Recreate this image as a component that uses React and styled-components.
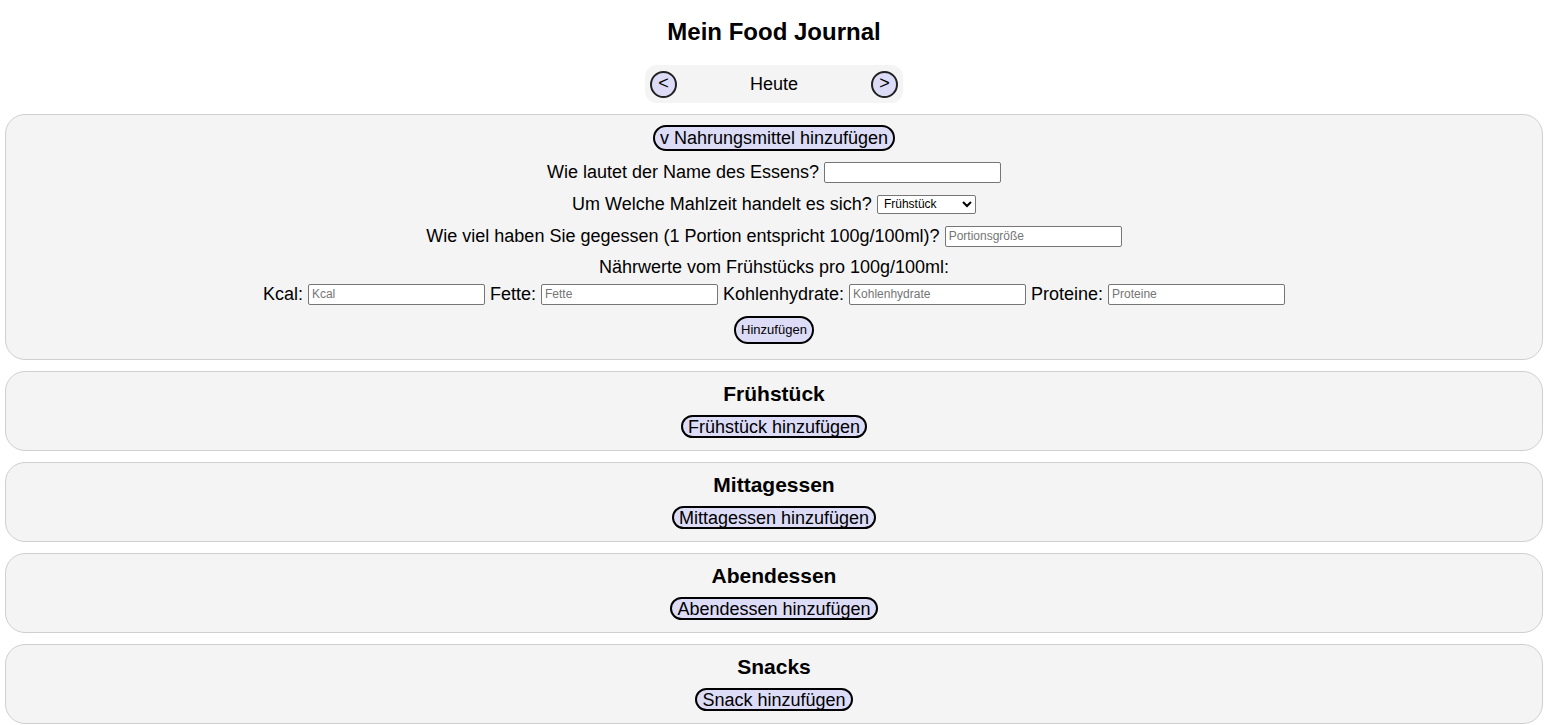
import styled, { createGlobalStyle } from "styled-components";

const GlobalStyle = createGlobalStyle`
    body {
        margin: 0;
        font-family: "Liberation Sans", Arial, sans-serif;
        color: #000;
        background: #fff;
    }
`;

const Page = styled.div`
    padding: 0 11px 0 5px;
    display: flex;
    flex-direction: column;
    gap: 11px;
`;

const Header = styled.div`
    display: flex;
    flex-direction: column;
    align-items: center;
    padding-top: 18px;
`;

const Title = styled.h1`
    margin: 0;
    font-size: 24px;
    line-height: 27px;
    font-weight: bold;
`;

const DateNav = styled.div`
    margin-top: 20px;
    width: 258px;
    height: 38px;
    box-sizing: border-box;
    padding: 0 5px;
    background: #f4f4f4;
    border-radius: 12px;
    display: flex;
    align-items: center;
    justify-content: space-between;
    font-size: 18px;
`;

const RoundButton = styled.button`
    width: 27px;
    height: 27px;
    padding: 0 0 2px;
    border-radius: 50%;
    border: 2px solid #222;
    background: #dcdcf6;
    font-family: "Liberation Sans", Arial, sans-serif;
    font-size: 18px;
    line-height: 20px;
    color: #000;
`;

const Section = styled.section`
    background: #f4f4f4;
    border: 1px solid #cfcfcf;
    border-radius: 20px;
    padding: ${p => (p.$form ? "10px 0 15px" : "10px 0 12px")};
    display: flex;
    flex-direction: column;
    align-items: center;
`;

const PillButton = styled.button`
    height: ${p => (p.$small ? "28px" : "23px")};
    padding: 0 5px;
    border: 2px solid #000;
    border-radius: 14px;
    background: #dcdcf6;
    color: #000;
    font-family: "Liberation Sans", Arial, sans-serif;
    font-size: ${p => (p.$small ? "13px" : "18px")};
    line-height: 18px;
`;

const ToggleButton = styled(PillButton)`
    height: 26px;
`;

const Form = styled.div`
    display: flex;
    flex-direction: column;
    align-items: center;
    gap: 8px;
    margin-top: 9px;
`;

const Row = styled.div`
    height: 24px;
    display: flex;
    align-items: center;
    justify-content: center;
    font-size: 18px;
    gap: 5px;
`;

const NutritionBlock = styled.div`
    display: flex;
    flex-direction: column;
    align-items: center;
    gap: 3px;
    margin-top: -1px;
    margin-bottom: 2px;
`;

const TextInput = styled.input`
    width: 177px;
    height: 21px;
    box-sizing: border-box;
    border: 1px solid #767676;
    border-radius: 2px;
    padding: 1px 3px;
    background: #fff;
    font-family: "Liberation Sans", Arial, sans-serif;
    font-size: 12px;
    &::placeholder {
        color: #757575;
    }
`;

const Select = styled.select`
    width: 99px;
    height: 19px;
    font-family: "Liberation Sans", Arial, sans-serif;
    font-size: 12px;
    border: 1px solid #767676;
    border-radius: 2px;
    background: #fff;
    padding: 0 2px;
`;

const Label = styled.span`
    font-size: 18px;
`;

const MealTitle = styled.h2`
    margin: 0;
    font-size: 21px;
    line-height: 23px;
    font-weight: bold;
`;

const MealBody = styled.div`
    margin-top: 10px;
`;

const meals = [
    { title: "Frühstück", button: "Frühstück hinzufügen" },
    { title: "Mittagessen", button: "Mittagessen hinzufügen" },
    { title: "Abendessen", button: "Abendessen hinzufügen" },
    { title: "Snacks", button: "Snack hinzufügen" },
];

export default function App() {
    return (
        <>
            <GlobalStyle />
            <Page>
                <Header>
                    <Title>Mein Food Journal</Title>
                    <DateNav>
                        <RoundButton>&lt;</RoundButton>
                        <span>Heute</span>
                        <RoundButton>&gt;</RoundButton>
                    </DateNav>
                </Header>

                <Section $form>
                    <ToggleButton>v Nahrungsmittel hinzufügen</ToggleButton>
                    <Form>
                        <Row>
                            <Label>Wie lautet der Name des Essens?</Label>
                            <TextInput type="text" />
                        </Row>
                        <Row>
                            <Label>Um Welche Mahlzeit handelt es sich?</Label>
                            <Select defaultValue="Frühstück">
                                <option>Frühstück</option>
                                <option>Mittagessen</option>
                                <option>Abendessen</option>
                                <option>Snacks</option>
                            </Select>
                        </Row>
                        <Row>
                            <Label>Wie viel haben Sie gegessen (1 Portion entspricht 100g/100ml)?</Label>
                            <TextInput type="text" placeholder="Portionsgröße" />
                        </Row>
                        <NutritionBlock>
                            <Row>Nährwerte vom Frühstücks pro 100g/100ml:</Row>
                            <Row>
                                <Label>Kcal:</Label>
                                <TextInput placeholder="Kcal" />
                                <Label>Fette:</Label>
                                <TextInput placeholder="Fette" />
                                <Label>Kohlenhydrate:</Label>
                                <TextInput placeholder="Kohlenhydrate" />
                                <Label>Proteine:</Label>
                                <TextInput placeholder="Proteine" />
                            </Row>
                        </NutritionBlock>
                        <PillButton $small>Hinzufügen</PillButton>
                    </Form>
                </Section>

                {meals.map(meal => (
                    <Section key={meal.title}>
                        <MealTitle>{meal.title}</MealTitle>
                        <MealBody>
                            <PillButton>{meal.button}</PillButton>
                        </MealBody>
                    </Section>
                ))}
            </Page>
        </>
    );
}
